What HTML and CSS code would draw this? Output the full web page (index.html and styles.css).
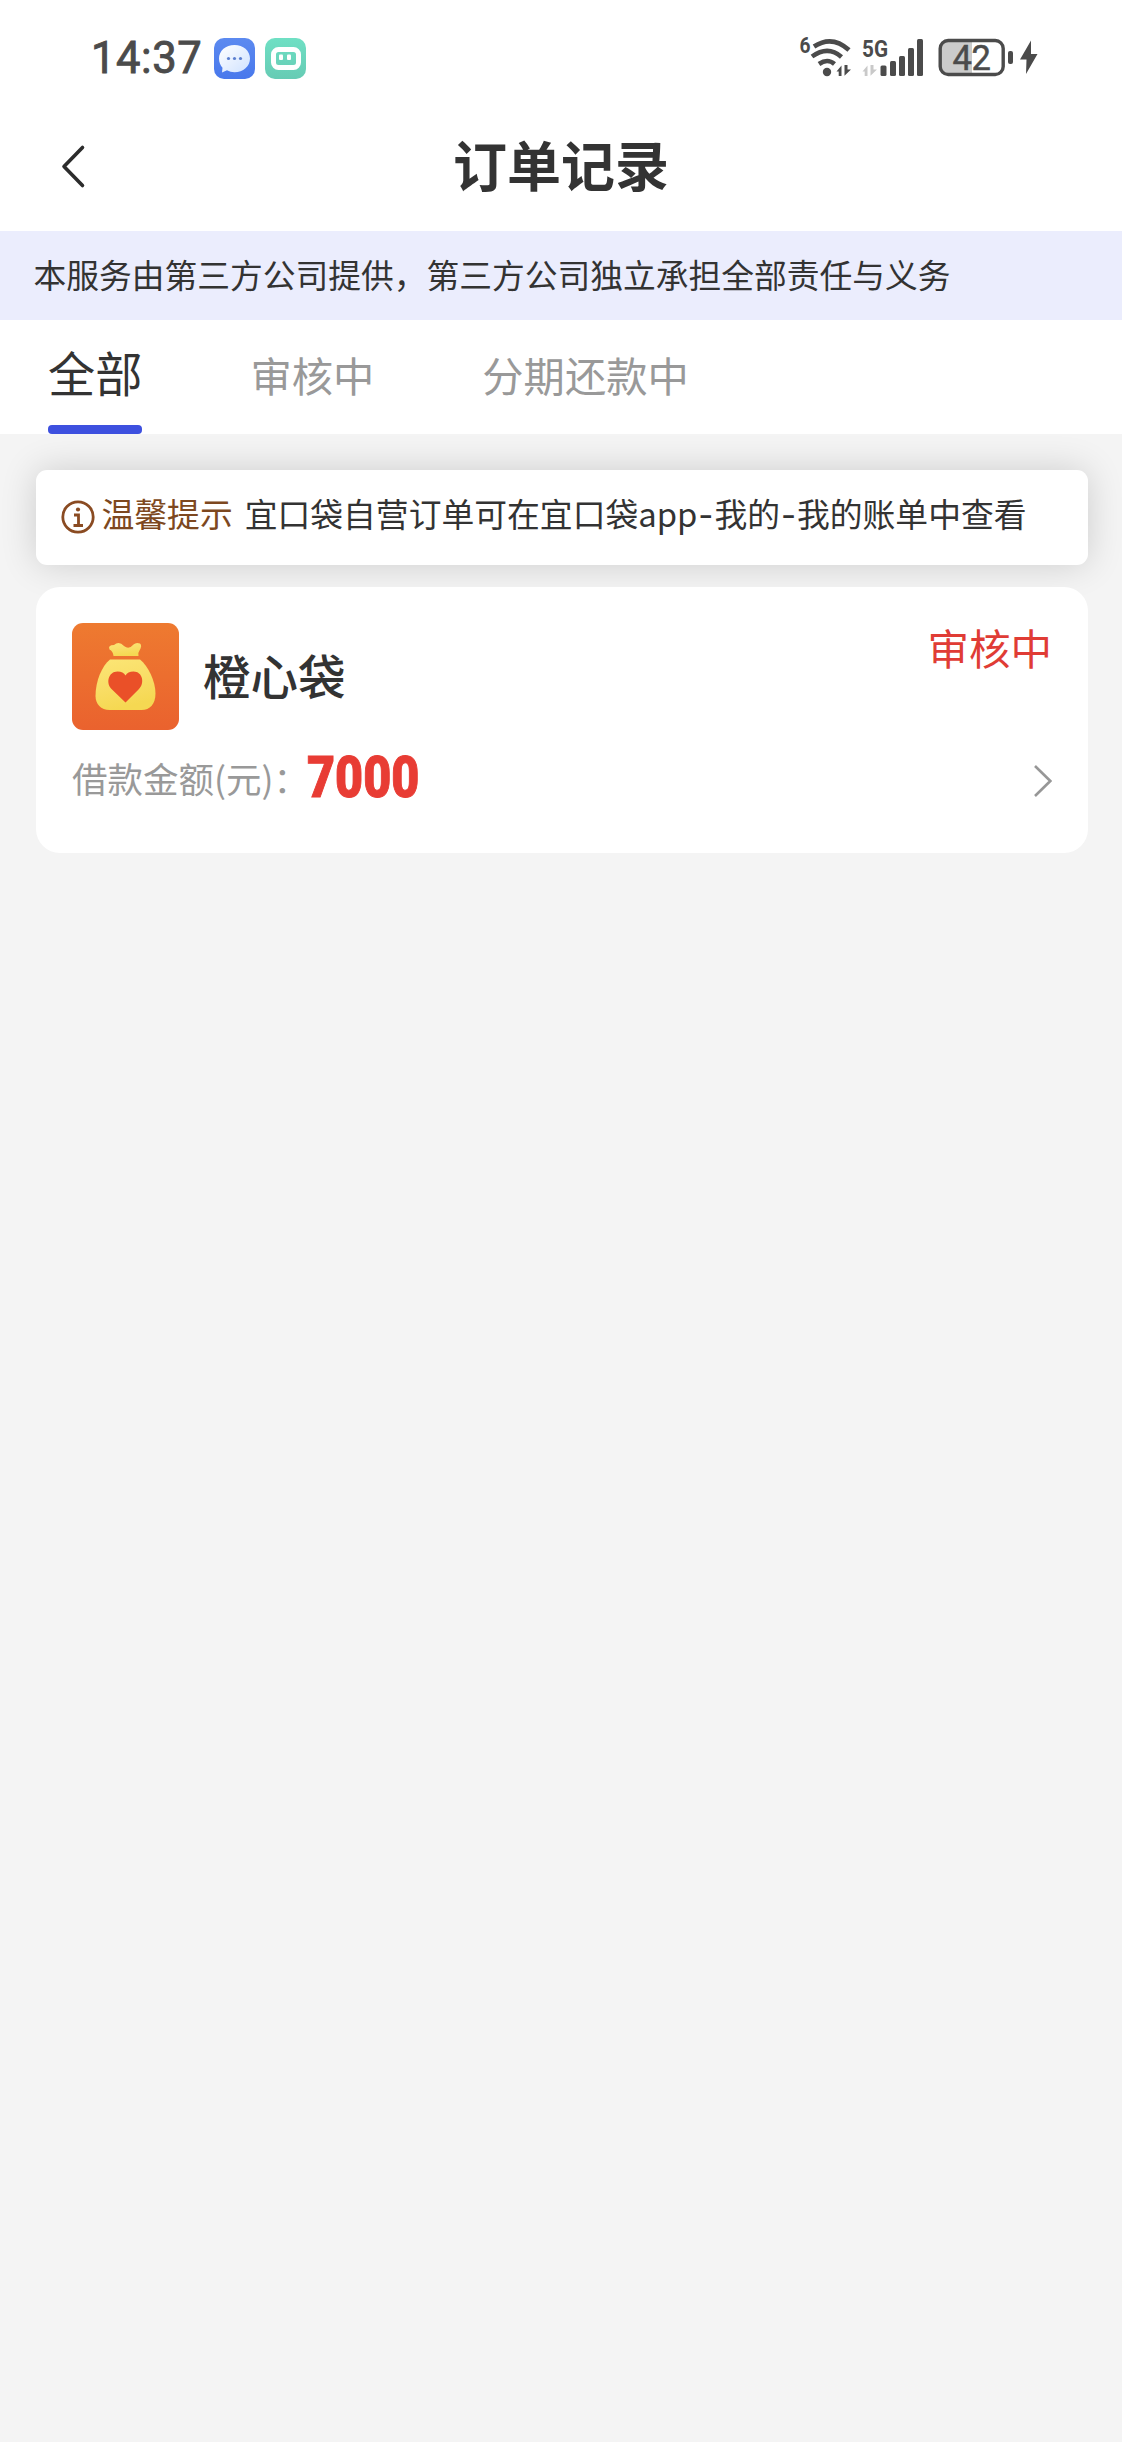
FILE: index.html
```html
<!DOCTYPE html>
<html lang="zh-CN">
<head>
<meta charset="utf-8">
<title>订单记录</title>
<link rel="stylesheet" href="styles.css">
</head>
<body>
<header class="top">
  <div class="status">
    <span class="time">14:37</span>
    <svg class="app-icon" width="41" height="41" viewBox="0 0 41 41">
      <defs>
        <linearGradient id="bubble" x1="0" y1="0" x2="1" y2="1"><stop offset="0" stop-color="#fff"/><stop offset="1" stop-color="#cfe2ff"/></linearGradient>
        <linearGradient id="blue" x1="0" y1="0" x2="0" y2="1"><stop offset="0" stop-color="#5c8af0"/><stop offset="1" stop-color="#4878ec"/></linearGradient>
      </defs>
      <rect width="41" height="41" rx="10" fill="url(#blue)"/>
      <path d="M20.500 7C11.800 7 5 12.800 5 20.500c0 4 1.500 7 3.500 9.300L8 34.500l5-2.200c2.300 1.200 4.800 1.900 7.500 1.900 8.700 0 15.500-6 15.500-13.700S29.200 7 20.500 7z" fill="url(#bubble)"/>
      <g fill="#5b7fd0"><circle cx="14.500" cy="20.500" r="1.600"/><circle cx="20.500" cy="20.500" r="1.600"/><circle cx="26.500" cy="20.500" r="1.600"/></g>
    </svg>
    <svg class="app-icon" width="41" height="41" viewBox="0 0 41 41">
      <defs><linearGradient id="green" x1="0" y1="0" x2="0" y2="1"><stop offset="0" stop-color="#6fe0c4"/><stop offset="1" stop-color="#66cbb4"/></linearGradient></defs>
      <rect width="41" height="41" rx="10" fill="url(#green)"/>
      <rect x="8.500" y="11.500" width="25" height="18" rx="5" fill="none" stroke="#fff" stroke-width="5"/>
      <rect x="14" y="16.500" width="4" height="5.500" rx="1" fill="#fff"/><rect x="22" y="16.500" width="4" height="5.500" rx="1" fill="#fff"/>
    </svg>
    <svg class="signals" width="280" height="80" viewBox="0 0 280 80">
      <text x="19.500" y="33" font-size="22" font-weight="700" textLength="11" lengthAdjust="spacingAndGlyphs">6</text>
      <g fill="none" stroke="#4b4b4b" stroke-width="4.600">
        <path d="M34 26.500Q52 14.500 69 30"/><path d="M32 36.500Q48 25 61.500 37"/><path d="M39 44Q47.500 38 54.500 44"/>
      </g>
      <circle cx="47" cy="52" r="4.200"/>
      <path d="M56.500 51.500l5-6V56h-2.800v-4.500zM64.500 45v10.800l6.500-6.300h-3.500V45z"/>
      <text x="82" y="36.500" font-size="23" font-weight="700" textLength="26" lengthAdjust="spacingAndGlyphs">5G</text>
      <path fill="#c9c9c9" d="M82.500 51.500l5-6V56h-2.800v-4.500zM90.500 45v10.800l6.500-6.300h-3.500V45z"/>
      <rect x="100.500" y="45.500" width="6" height="10.500" rx="1.500"/><rect x="110" y="41" width="6" height="15" rx="1.500"/><rect x="119" y="36" width="6" height="20" rx="1.500"/><rect x="128" y="28" width="6" height="28" rx="1.500"/><rect x="137" y="19" width="6" height="37" rx="1.500"/>
      <path fill="#cbcbcb" d="M167 21h25v33h-25q-6 0-6-6V27q0-6 6-6z"/>
      <rect x="160.200" y="20.500" width="63" height="34" rx="8" fill="none" stroke="#4b4b4b" stroke-width="3.400"/>
      <text x="172.500" y="49.500" font-size="34.500" textLength="38.500" stroke="#4b4b4b" stroke-width=".5">42</text>
      <rect x="228" y="31" width="5" height="13" rx="2"/>
      <path d="M251 20.500L240 39.500h6.500l-.5 14.500L257.500 34H251z"/>
    </svg>
  </div>
  <div class="nav">
    <svg class="back" width="30" height="46" viewBox="0 0 30 46" fill="none" stroke="#2c2c2c" stroke-width="3.600" stroke-linecap="round" stroke-linejoin="round"><path d="M25.500 3.500L7 22.500 25.500 41.500"/></svg>
    <h1 class="title">订单记录</h1>
  </div>
</header>
<div class="notice">本服务由第三方公司提供，第三方公司独立承担全部责任与义务</div>
<nav class="tabs">
  <span class="tab active">全部</span>
  <span class="tab">审核中</span>
  <span class="tab">分期还款中</span>
</nav>
<main class="content">
  <section class="tip">
    <svg class="info" width="34" height="34" viewBox="0 0 34 34" fill="none" stroke="#8a4b22" stroke-width="2.800"><circle cx="17" cy="17" r="15.200"/><path d="M13 15h4.500v10.500M12.500 25.500h9.500"/><circle cx="17" cy="9.500" r="2.100" fill="#8a4b22" stroke="none"/></svg>
    <span class="tip-label">温馨提示</span>
    <span class="tip-text">宜口袋自营订单可在宜口袋app<i class="dash">-</i>我的<i class="dash">-</i>我的账单中查看</span>
  </section>
  <section class="order">
    <div class="order-head">
      <svg class="logo" width="107" height="107" viewBox="0 0 107 107">
        <defs>
          <linearGradient id="bg" x1="0" y1="0" x2="0" y2="1"><stop offset="0" stop-color="#ee7a30"/><stop offset="1" stop-color="#ea622e"/></linearGradient>
          <linearGradient id="bag" x1="0" y1="0" x2="0.300" y2="1"><stop offset="0" stop-color="#fbe675"/><stop offset="0.500" stop-color="#f9de68"/><stop offset="1" stop-color="#f5d852"/></linearGradient>
        </defs>
        <rect width="107" height="107" rx="11" fill="url(#bg)"/>
        <path d="M41.500 33Q41 28 37.500 26.500 35.500 22 42 22 47 17.500 52 23 57 27 61.500 21.500 64 19 68 20.500 70.500 22.500 67.500 27.500 65.500 30 66.500 33z" fill="url(#bag)"/>
        <path d="M38 36.500H68C76 43 83.500 58 83.500 70.500 83.500 81 78 87 69.500 87H37.500C29 87 23.500 81 23.500 73 23.500 58 30 43 38 36.500z" fill="url(#bag)"/>
        <path d="M53.500 79.500L39.500 66C33.500 60 36.500 48.500 45.500 48.500 49.500 48.500 52 50 53.500 52.500 55 50 57.500 48.500 61.500 48.500 70.500 48.500 73 60 67 66z" fill="#ea5028"/>
      </svg>
      <h2 class="name">橙心袋</h2>
      <span class="state">审核中</span>
    </div>
    <div class="order-foot">
      <span class="label">借款金额(元)：</span>
      <strong class="amount">7000</strong>
      <svg class="more" width="20" height="34" viewBox="0 0 20 34" fill="none" stroke="#979797" stroke-width="2.600"><path d="M3 3L18.300 18 3 33"/></svg>
    </div>
  </section>
</main>
</body>
</html>
```
FILE: styles.css
```css
* { box-sizing: border-box; }
body {
  margin: 0;
  min-height: 2442px;
  background: #f4f4f4;
  color: #333;
  font-family: "Noto Sans CJK SC", sans-serif;
}
.top { height: 231px; background: #fff; }
.status {
  display: flex;
  align-items: center;
  height: 117px;
  padding: 0 62px 0 91px;
}
.time {
  width: 123px;
  font: 400 43.5px/60px Roboto, sans-serif;
  letter-spacing: .6px;
  color: #4b4b4b;
  -webkit-text-stroke: .9px #4b4b4b;
}
.app-icon { margin-right: 10px; }
.signals {
  margin-left: auto;
  margin-top: 3px;
  fill: #4b4b4b;
  font-family: Roboto, sans-serif;
}
.nav {
  display: grid;
  grid-template-columns: 60px 1fr 60px;
  align-items: center;
  height: 100px;
  padding: 0 57px;
}
.title {
  margin: 0;
  text-align: center;
  font-size: 54px;
  font-weight: 700;
  line-height: 94px;
  height: 100px;
}
.notice {
  height: 89px;
  padding-left: 33.500px;
  background: #ebedfd;
  font-size: 32.75px;
  line-height: 86px;
  white-space: nowrap;
}
.tabs {
  display: flex;
  gap: 108px;
  height: 114px;
  padding-left: 48px;
  background: #fff;
}
.tab {
  height: 114px;
  font-size: 41.3px;
  line-height: 108px;
  color: #999;
}
.tab.active {
  display: flex;
  flex-direction: column;
  justify-content: space-between;
  font-size: 47.2px;
  line-height: 104px;
  color: #333;
}
.tab.active::after {
  content: "";
  height: 9px;
  border-radius: 4px;
  background: #3d50df;
}
.content {
  display: flex;
  flex-direction: column;
  gap: 22px;
  padding: 36px 34px 0 36px;
  overflow: hidden;
}
.tip {
  display: flex;
  align-items: center;
  height: 95px;
  padding-left: 25px;
  border-radius: 11px;
  background: #fff;
  box-shadow: 0 0 36px rgba(0, 0, 0, .16);
  font-size: 32.8px;
  line-height: 86px;
  white-space: nowrap;
}
.info { margin-top: -2px; }
.tip-label, .tip-text { height: 95px; }
.tip-label { margin: 0 12px 0 6.500px; color: #7d4820; }
.dash {
  display: inline-block;
  width: 17px;
  text-align: center;
  font-family: Inter, sans-serif;
  font-style: normal;
  line-height: 1;
}
.order {
  height: 266px;
  padding: 36px;
  border-radius: 24px;
  background: #fff;
}
.order-head { display: flex; align-items: center; height: 107px; }
.name {
  height: 107px;
  margin: 0 0 0 24px;
  font-size: 47.500px;
  font-weight: 500;
  line-height: 104px;
}
.state {
  align-self: flex-start;
  margin-left: auto;
  font-size: 41.5px;
  line-height: 49px;
  color: #e03c35;
}
.order-foot { display: flex; align-items: center; height: 100px; }
.label {
  width: 235px;
  height: 100px;
  font-size: 35.5px;
  line-height: 96px;
  color: #999;
  white-space: nowrap;
}
.amount {
  height: 100px;
  font: 900 57px/95px Roboto, sans-serif;
  color: #e83c34;
  transform: scaleX(.85);
  transform-origin: left;
  -webkit-text-stroke: 1px #e83c34;
}
.more { margin-left: auto; }
```
